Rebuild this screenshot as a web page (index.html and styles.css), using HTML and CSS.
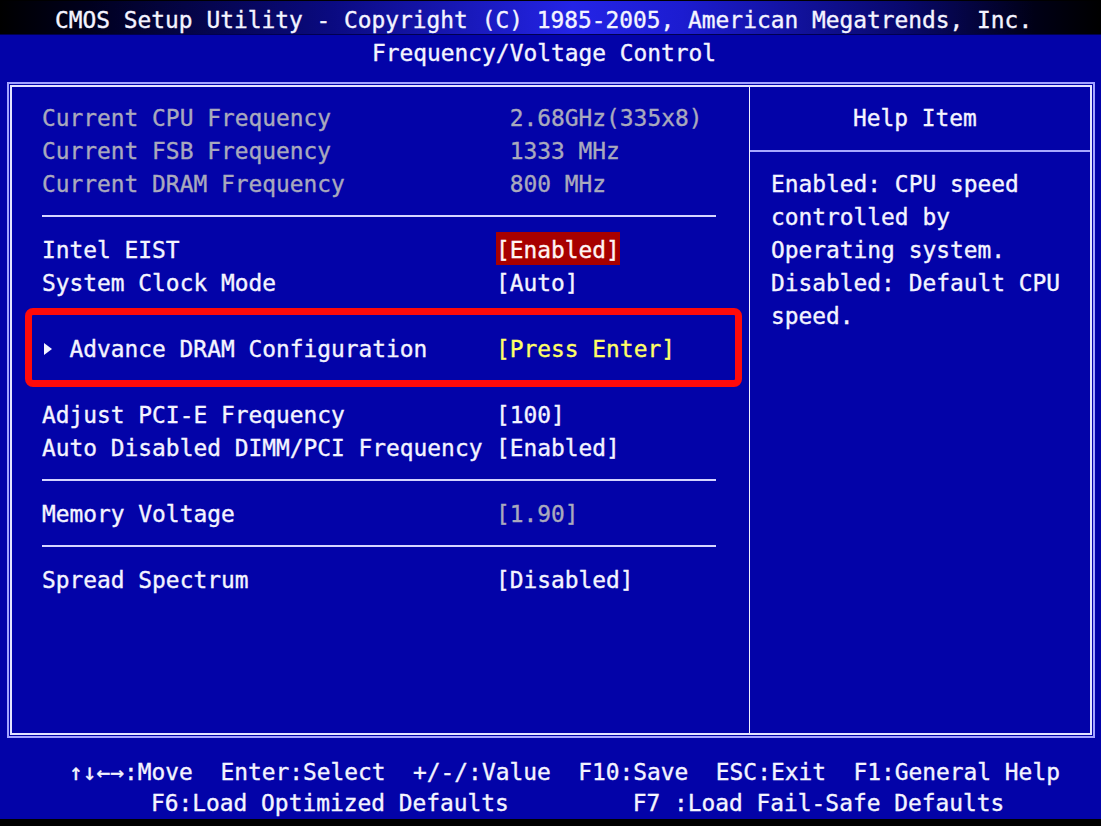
FILE: index.html
```html
<!DOCTYPE html>
<html lang="en">
<head>
<meta charset="utf-8">
<title>CMOS Setup Utility - Frequency/Voltage Control</title>
<link rel="stylesheet" href="styles.css">
</head>
<body>
<div class="screen">
  <header class="titlebar"><span class="title">CMOS Setup Utility - Copyright (C) 1985-2005, American Megatrends, Inc.</span></header>
  <div class="subtitle">Frequency/Voltage Control</div>
  <main class="frame">
    <section class="menu">
      <div class="row info"><span class="label">Current CPU Frequency</span><span class="val shift">2.68GHz(335x8)</span></div>
      <div class="row info"><span class="label">Current FSB Frequency</span><span class="val shift">1333 MHz</span></div>
      <div class="row info"><span class="label">Current DRAM Frequency</span><span class="val shift">800 MHz</span></div>
      <div class="sep"></div>
      <div class="row"><span class="label">Intel EIST</span><span class="val selected">[Enabled]</span></div>
      <div class="row"><span class="label">System Clock Mode</span><span class="val">[Auto]</span></div>
      <div class="row"></div>
      <div class="row"><span class="label"><span class="arrow"></span>Advance DRAM Configuration</span><span class="val submenu">[Press Enter]</span></div>
      <div class="sep"></div>
      <div class="row"><span class="label">Adjust PCI-E Frequency</span><span class="val">[100]</span></div>
      <div class="row"><span class="label">Auto Disabled DIMM/PCI Frequency</span><span class="val">[Enabled]</span></div>
      <div class="sep"></div>
      <div class="row"><span class="label">Memory Voltage</span><span class="val dim">[1.90]</span></div>
      <div class="sep"></div>
      <div class="row"><span class="label">Spread Spectrum</span><span class="val">[Disabled]</span></div>
    </section>
    <aside class="help">
      <div class="help-head">Help Item</div>
      <div class="help-rule"></div>
      <p class="help-text">Enabled: CPU speed<br>controlled by<br>Operating system.<br>Disabled: Default CPU<br>speed.</p>
    </aside>
  </main>
  <footer class="keys">
    <div class="keyrow k1">↑↓←→:Move  Enter:Select  +/-/:Value  F10:Save  ESC:Exit  F1:General Help</div>
    <div class="keyrow k2">F6:Load Optimized Defaults         F7 :Load Fail-Safe Defaults</div>
  </footer>
  <div class="callout"></div>
</div>
</body>
</html>
```

FILE: styles.css
```css
html, body {
  margin: 0;
  padding: 0;
  background: #000;
}

body {
  font-family: "DejaVu Sans Mono", "Liberation Mono", monospace;
  font-size: 22.86px;
  color: #f4f4ff;
  -webkit-text-stroke: 0.35px currentColor;
}

.screen {
  position: relative;
  width: 1101px;
  height: 819px;
  overflow: hidden;
  background: #0303a8;
  display: flex;
  flex-direction: column;
}

.titlebar {
  height: 35px;
  box-sizing: border-box;
  padding: 4px 0 0 55px;
  line-height: 30px;
  border-top: 1px solid #000;
  border-bottom: 1px solid #000050;
  background: linear-gradient(to right, #000 0%, #00001e 8%, #0a0a80 30%, #2424e6 52%, #1c1cd0 62%, #08086c 82%, #000016 94%, #000 100%);
  white-space: pre;
}

.subtitle {
  height: 33px;
  box-sizing: border-box;
  padding: 3px 0 0 372px;
  line-height: 30px;
  white-space: pre;
}

.frame {
  margin: 14px 0 0 7px;
  width: 1088px;
  height: 657px;
  box-sizing: border-box;
  border: 2px solid #a4a4ff;
  padding: 3px;
  box-shadow: inset 0 0 0 1px #0303a8, inset 0 0 0 3px #e4e4ff;
  display: flex;
}

.menu {
  width: 738px;
  box-sizing: border-box;
  padding: 13px 33px 0 30px;
  border-right: 1px solid #f0f0ff;
}

.row {
  height: 33px;
  display: flex;
  white-space: pre;
}

.label,
.val {
  box-sizing: border-box;
  height: 33px;
  padding-top: 4px;
  line-height: 29px;
}

.label {
  width: 454px;
  flex: none;
}

.info {
  color: #a9a9bd;
}

.val.shift {
  margin-left: 13.76px;
}

.val.selected {
  background: #a80000;
  color: #fff4f4;
}

.val.submenu {
  color: #ffff66;
}

.val.dim {
  color: #a9a9bd;
}

.arrow {
  display: inline-block;
  width: 27.5px;
  height: 29px;
  vertical-align: top;
  position: relative;
}

.arrow::before {
  content: "";
  position: absolute;
  left: 2px;
  top: 8px;
  border-left: 8px solid #f4f4ff;
  border-top: 6px solid transparent;
  border-bottom: 6px solid transparent;
}

.sep {
  height: 2px;
  margin: 16px 0 15px;
  background: #d4d4ff;
}

.help {
  flex: 1;
  padding-top: 13px;
}

.help-head {
  height: 33px;
  box-sizing: border-box;
  padding: 4px 0 0 103px;
  line-height: 29px;
  white-space: pre;
}

.help-rule {
  margin-top: 17px;
  height: 2px;
  background: #a8a8ff;
}

.help-text {
  margin: 16px 0 0;
  padding-left: 21px;
  line-height: 33px;
  white-space: pre;
}

.keys {
  margin-top: 19px;
}

.keyrow {
  height: 31px;
  line-height: 31px;
  white-space: pre;
}

.k1 {
  padding-left: 69px;
}

.k2 {
  padding-left: 151px;
}

.callout {
  position: absolute;
  left: 25px;
  top: 308px;
  width: 717px;
  height: 79px;
  box-sizing: border-box;
  border: 7px solid #ff0a0a;
  border-radius: 8px;
}
```
